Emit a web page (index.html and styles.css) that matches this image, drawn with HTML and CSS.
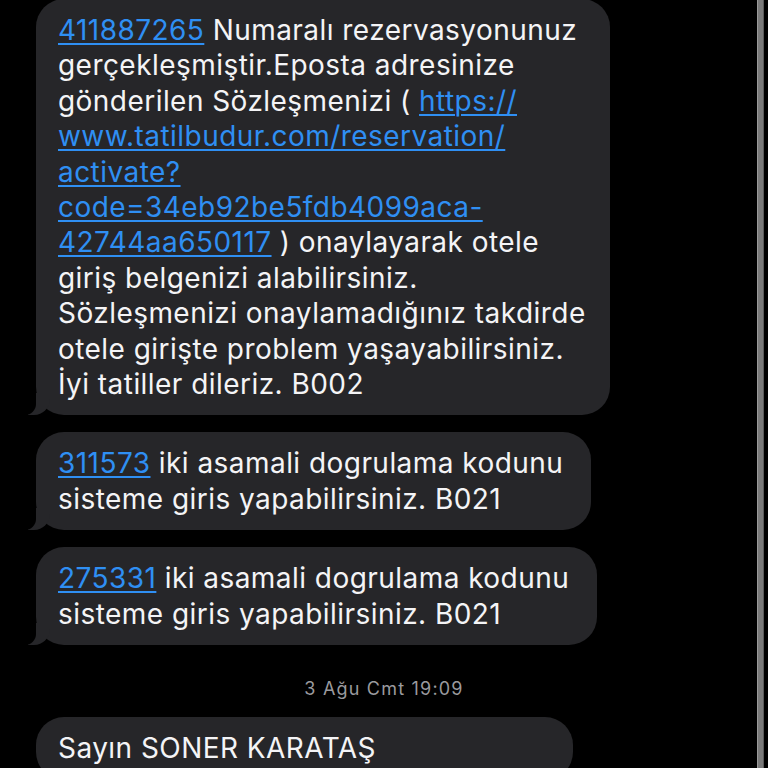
FILE: index.html
```html
<!DOCTYPE html>
<html lang="tr">
<head>
<meta charset="utf-8">
<title>Mesajlar</title>
<link rel="stylesheet" href="styles.css">
</head>
<body>
<div class="thread">
  <div class="bubble first tail">
    <a class="link" href="#">411887265</a> Numaralı rezervasyonunuz<br>
    gerçekleşmiştir.Eposta adresinize<br>
    gönderilen Sözleşmenizi ( <a class="link" href="#">https://<br>www.tatilbudur.com/reservation/<br>activate?<br>code=34eb92be5fdb4099aca-<br>42744aa650117</a> ) onaylayarak otele<br>
    giriş belgenizi alabilirsiniz.<br>
    Sözleşmenizi onaylamadığınız takdirde<br>
    otele girişte problem yaşayabilirsiniz.<br>
    İyi tatiller dileriz. B002
  </div>
  <div class="bubble tail">
    <a class="link" href="#">311573</a> iki asamali dogrulama kodunu<br>
    sisteme giris yapabilirsiniz. B021
  </div>
  <div class="bubble tail">
    <a class="link" href="#">275331</a> iki asamali dogrulama kodunu<br>
    sisteme giris yapabilirsiniz. B021
  </div>
  <div class="stamp">3 Ağu Cmt 19:09</div>
  <div class="bubble last">
    Sayın SONER KARATAŞ
  </div>
</div>
<div class="scrollbar"></div>
</body>
</html>
```
FILE: styles.css
```css
html, body {
  margin: 0;
  padding: 0;
  background: #000;
  height: 768px;
  overflow: hidden;
}

body {
  font-family: Inter, "Noto Sans", sans-serif;
  color: #f4f4f6;
}

.thread {
  display: flex;
  flex-direction: column;
  align-items: flex-start;
  gap: 17px;
  padding-left: 36px;
}

.bubble {
  position: relative;
  background: #262629;
  border-radius: 28px;
  padding: 14px 28px 13px 22px;
  font-size: 28px;
  line-height: 35.4px;
  letter-spacing: 0.45px;
  white-space: nowrap;
}

.bubble.first {
  margin-top: -1px;
  padding-right: 24px;
}

.tail::before {
  content: "";
  position: absolute;
  left: -8px;
  bottom: 0;
  width: 22px;
  height: 22px;
  background: #262629;
  border-bottom-right-radius: 16px;
}

.tail::after {
  content: "";
  position: absolute;
  left: -12px;
  bottom: 0;
  width: 12px;
  height: 22px;
  background: #000;
  border-bottom-right-radius: 11px;
}

.link {
  color: #2f8ff3;
  text-decoration: underline;
  text-decoration-thickness: 1.5px;
  text-underline-offset: 3px;
}

.stamp {
  align-self: stretch;
  margin-left: -36px;
  text-align: center;
  font-size: 18px;
  line-height: 22px;
  color: #9a9a9e;
  letter-spacing: 1.2px;
  padding-top: 16px;
  padding-bottom: 0;
}

.bubble.last {
  box-sizing: border-box;
  width: 537px;
  padding-top: 14px;
}

.scrollbar {
  position: fixed;
  top: 0;
  bottom: 0;
  left: 757px;
  width: 5px;
  background: #7a7a7a;
  border-left: 1px solid #9a9a9a;
  border-right: 1px solid #5a5a5a;
}
```
